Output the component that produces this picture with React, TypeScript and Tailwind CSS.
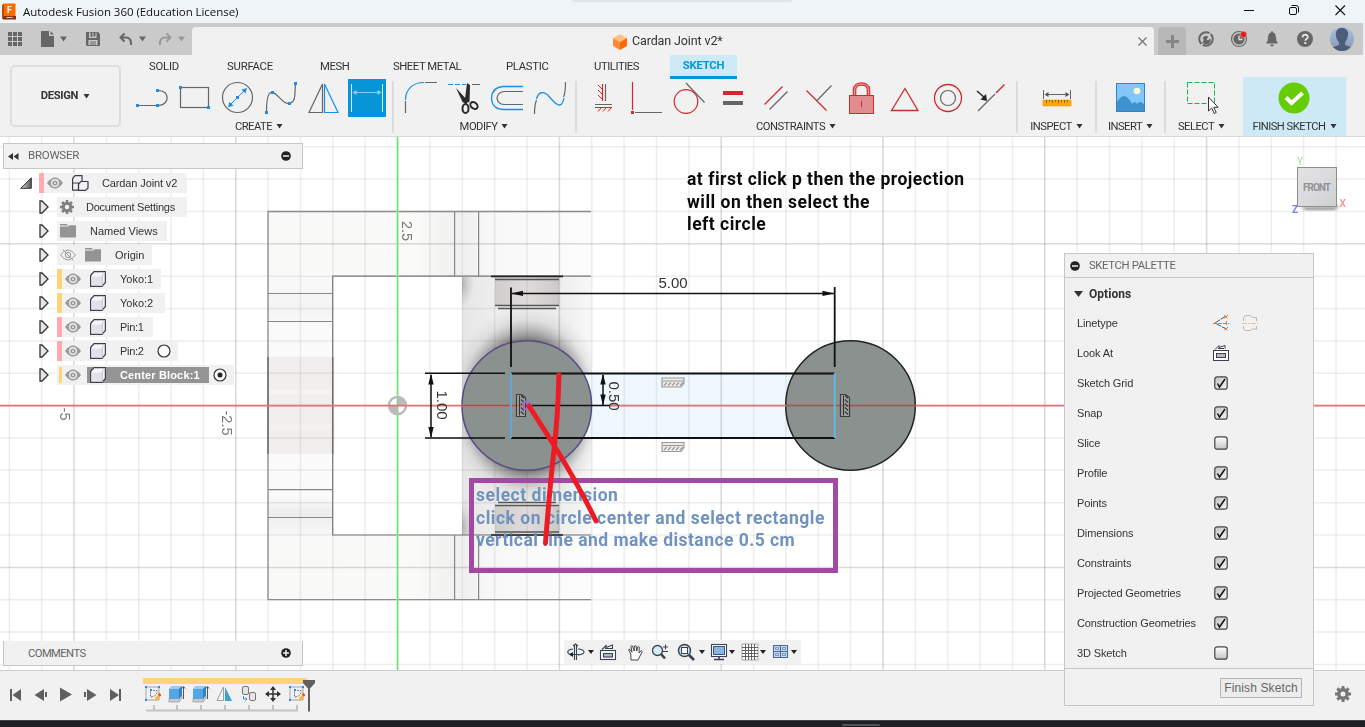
import React from "react";

type Kids = { children?: React.ReactNode };

/** Drawing whose inner coordinates are those of the window. */
function Art({ x, y, w, h, className = "", children }: { x: number; y: number; w: number; h: number; className?: string } & Kids) {
  return (
    <svg width={w} height={h} viewBox={`${x} ${y} ${w} ${h}`} fill="none" className={`block shrink-0 ${className}`}>
      {children}
    </svg>
  );
}

function Caret({ className = "ml-[4px]" }: { className?: string }) {
  return (
    <svg width="7" height="5" viewBox="0 0 7 5" className={`shrink-0 ${className}`}>
      <path d="M.5 0h6L3.500 4.500z" fill="#333" />
    </svg>
  );
}

const BLUE = "#1a8fe8";
const GREY = "#666";
const RED = "#d12a2e";

function Dot({ x, y, c = BLUE }: { x: number; y: number; c?: string }) {
  return <rect x={x - 1.5} y={y - 1.5} width="3" height="3" fill={c} />;
}

/* ---------- title and tabs ---------- */

function TitleBar() {
  return (
    <div className="relative flex h-[23px] shrink-0 items-center bg-[#eff4f9]">
      <div className="absolute left-[572px] top-0 h-[2px] w-[220px] rounded-b bg-[#e0e4ea]" />
      <svg width="15" height="17" viewBox="0 0 15 17" className="ml-[2px]">
        <path d="M0 2.500 2 .5h11.500v13H0z" fill="#ff6b00" />
        <path d="M0 2.500 2 .5V13.500L0 15z" fill="#b84a08" />
        <path d="M0 15 2 13h12v3.500H1z" fill="#843306" />
        <text x="5" y="9.500" fontSize="8.500" fontWeight="700" fill="#fff" fontFamily="Roboto, sans-serif">F</text>
        <rect x="4.500" y="14" width="6" height="1" fill="#f3c6a6" />
      </svg>
      <span className="ml-[6px] font-['Open_Sans',sans-serif] text-[11.500px] leading-none tracking-[-0.050px] text-[#111]">
        Autodesk Fusion 360 (Education License)
      </span>
      <Art x={1230} y={0} w={135} h={23} className="ml-auto">
        <path d="M1244 10.500h10M1335.500 5.500l9.500 9.500M1345 5.500 1335.500 15" stroke="#111" strokeWidth="1.100" />
        <rect x="1289.500" y="7.500" width="7" height="7" rx="1.500" stroke="#111" />
        <path d="M1291.500 5.500h4.500q2.500 0 2.500 2.500v4.500" stroke="#111" />
      </Art>
    </div>
  );
}

function TabBar() {
  return (
    <div className="flex h-8 shrink-0 items-end bg-[#cacaca]">
      <Art x={0} y={23} w={192} h={32}>
        <g fill="#666">
          {[8, 13, 18].map((x) => [32, 37, 42].map((y) => <rect key={`${x}-${y}`} x={x} y={y} width="4" height="4" />))}
          <path d="M41 31h8v5h5v11H41zM50.500 31l3.500 3.500h-3.500z" />
          <path d="M60 36.500h7l-3.500 5zM139 36.500h7l-3.500 5z" />
          <path fillRule="evenodd" d="M86 32h12l2 2v12H87l-1-1zM89 32.500v5.500h7.500v-5.500h-1v4h-2v-4h-1v4.500h-2v-4.500zM88.500 40h9v5h-9z" />
          <path d="M90 41.500h6v1h-6zM90 43.500h6v1h-6z" />
        </g>
        <path d="M124.500 33.500 120.500 37.500l4 4M121 37.500h5.500q5 .5 4.500 7.500" stroke="#666" strokeWidth="2" />
        <path d="M166.500 33.500l4 4-4 4M170 37.500h-5.500q-5 .5-4.500 7.500" stroke="#999" strokeWidth="2" />
        <path d="M178 36.500h7l-3.500 5z" fill="#999" />
      </Art>
      <div className="flex h-7 w-[962px] items-center rounded-t-[4px] bg-[#f1f1f1]">
        <svg width="14" height="16" viewBox="0 0 14 16" className="ml-[421px] mt-px">
          <path d="M7 0l7 4-7 4-7-4z" fill="#ffc08c" />
          <path d="M0 4l7 4v8l-7-4z" fill="#ff8a33" />
          <path d="M14 4 7 8v8l7-4z" fill="#f96a0a" />
        </svg>
        <span className="ml-[5px] mt-px w-[110px] whitespace-nowrap font-[Roboto,sans-serif] text-[12.500px] leading-none tracking-[-0.120px] text-[#333]">
          Cardan Joint v2*
        </span>
        <svg width="9" height="9" viewBox="0 0 9 9" className="ml-auto mr-[7px]">
          <path d="M.5.5l8 8M8.500.5l-8 8" stroke="#777" strokeWidth="1.300" />
        </svg>
      </div>
      <div className="ml-1 flex h-7 w-7 items-center justify-center rounded-t-[4px] bg-[#b8b8b8]">
        <svg width="13" height="13" viewBox="0 0 13 13">
          <path d="M6.500 0v13M0 6.500h13" stroke="#858585" strokeWidth="3" />
        </svg>
      </div>
      <Art x={1186} y={23} w={177} h={32}>
        <circle cx="1206" cy="39" r="6.800" stroke="#666" strokeWidth="2" strokeDasharray="14 1.500 20 1.500" />
        <path d="M1202 43l3-3M1204 39l-1-1q2-3 5-1l-2 2 2 2 2-2q1 4-3 5l-3 0z" fill="#666" stroke="#666" strokeWidth="1" />
        <circle cx="1239" cy="39" r="7.500" stroke="#666" strokeWidth="1.200" />
        <circle cx="1239" cy="39" r="5.600" fill="#666" />
        <path d="M1239 35.500v4h3.500" stroke="#ddd" strokeWidth="1.300" />
        <circle cx="1243.500" cy="34.500" r="3.200" fill="#e21b1b" stroke="#cacaca" strokeWidth=".5" />
        <path d="M1266 43.500q2-2.500 2-6 .3-4.500 3-5 0-1.500 1-1.500t1 1.500q2.700.5 3 5 0 3.500 2 6zM1270 44.500h4q-.5 2-2 2t-2-2z" fill="#666" />
        <circle cx="1305" cy="39" r="8" fill="#666" />
        <path d="M1302.500 37.500q0-2.800 2.700-2.800 2.600.2 2.600 2.300 0 1.300-1.600 2.200-.9.600-.9 1.600" stroke="#e5e5e5" strokeWidth="1.700" />
        <rect x="1304.300" y="42" width="2" height="2" fill="#e5e5e5" />
        <defs>
          <clipPath id="avatar"><circle cx="1342" cy="39" r="12" /></clipPath>
          <linearGradient id="avatarSky" x2="0" y2="1"><stop stopColor="#a9c0dc" /><stop offset="1" stopColor="#8499b6" /></linearGradient>
        </defs>
        <g clipPath="url(#avatar)">
          <rect x="1330" y="27" width="24" height="24" fill="url(#avatarSky)" />
          <path d="M1342 28c4.500 0 6.500 3 6 7-.3 3.500-2 6-3 7.500v2.500q5 1 7.500 3.500V52h-21v-3.500q2.500-2.500 7.500-3.500v-2.500c-1.500-2-3-4-3.200-7.500-.3-4 1.700-7 6.200-7z" fill="#4b5d78" />
        </g>
      </Art>
      <div className="ml-auto h-8 w-[2px] bg-[#eceef0]" />
    </div>
  );
}

/* ---------- ribbon ---------- */

const font = "font-[Roboto,sans-serif] leading-none";

function Group({ label, className = "", children }: { label: string; className?: string } & Kids) {
  return (
    <div className={`flex h-[59px] shrink-0 flex-col items-center pt-[1px] ${className}`}>
      <div className="flex h-10">{children}</div>
      <div className={`mt-[3px] flex items-center whitespace-nowrap text-[11.200px] tracking-[-0.500px] text-[#333] ${font}`}>
        {label}
        <Caret />
      </div>
    </div>
  );
}

function Rule({ className = "" }: { className?: string }) {
  return <div className={`mt-[4px] h-[52px] w-[2px] shrink-0 bg-[#dcdcdc] ${className}`} />;
}

function Ribbon() {
  return (
    <div className="flex h-[82px] shrink-0 border-b border-[#d9d9d9] bg-[#f1f1f1]">
      <div className={`ml-[10px] mt-[10px] flex h-[62px] w-[111px] items-center justify-center rounded-[5px] border-2 border-[#dedede] text-[11.200px] font-bold tracking-[-0.300px] text-[#333] ${font}`}>
        DESIGN
        <Caret className="ml-[5px]" />
      </div>
      <div className="flex flex-col">
        <div className={`flex h-[22px] items-center whitespace-nowrap text-[11.300px] tracking-[-0.450px] text-[#333] ${font}`}>
          <span className="ml-[28px] mt-px w-[78px] tracking-[-0.200px]">SOLID</span>
          <span className="mt-px w-[93px] tracking-[-0.200px]">SURFACE</span>
          <span className="mt-px w-[73px]">MESH</span>
          <span className="mt-px w-[113px]">SHEET METAL</span>
          <span className="mt-px w-[88px] tracking-[-0.300px]">PLASTIC</span>
          <span className="mt-px w-[76px]">UTILITIES</span>
          <span className="flex h-6 w-[67px] translate-y-px items-center justify-center border-b-[3px] border-[#0696d7] bg-[#cdeaf7] pt-px font-bold tracking-[-0.250px] text-[#0696d7]">SKETCH</span>
        </div>
        <div className="flex">
          <Group label="CREATE" className="ml-[9px] w-[258px]">
            <Art x={130} y={78} w={43} h={40}>
              <path d="M137 105.500h20q8 0 10-6 1-9-10-9" stroke={GREY} strokeWidth="1.200" />
              <Dot x={137.500} y={105.500} /><Dot x={157.500} y={105.500} /><Dot x={157.500} y={90.500} />
            </Art>
            <Art x={173} y={78} w={43} h={40}>
              <rect x="180.500" y="87.500" width="28" height="20" stroke={GREY} strokeWidth="1.200" />
              <Dot x={180.500} y={87.500} /><Dot x={208.500} y={107.500} />
            </Art>
            <Art x={216} y={78} w={43} h={40}>
              <circle cx="237.500" cy="97.500" r="15" stroke={GREY} strokeWidth="1.200" />
              <path d="M230 105l15-15" stroke={BLUE} />
              <path d="M228 107.300l1.500-5.500 4 4zM247 88l-1.500 5.500-4-4z" fill={BLUE} />
              <Dot x={237.500} y={97.500} />
            </Art>
            <Art x={259} y={78} w={43} h={40}>
              <path d="M266.500 112c0-20 4-22 9-18s9 11 15 9 4-12 5-19" stroke={GREY} strokeWidth="1.200" />
              <Dot x={266.500} y={112.500} /><Dot x={272.500} y={92.500} /><Dot x={289.500} y={103.500} /><Dot x={295.500} y={83.500} />
            </Art>
            <Art x={302} y={78} w={43} h={40}>
              <path d="M322.500 84v28.500h-13.500z" stroke={GREY} strokeWidth="1.200" />
              <path d="M324.500 84v28.500H338z" stroke={BLUE} strokeWidth="1.200" />
            </Art>
            <Art x={345} y={78} w={43} h={40}>
              <rect x="348" y="79" width="38" height="38" fill="#0696d7" />
              <path d="M351.500 84v28M382.500 84v28" stroke="#d5eefa" />
              <path d="M354 92.500h26" stroke="#8dd0f5" />
              <path d="M352.500 92.500l4-2.500v5zM381.500 92.500l-4-2.500v5z" fill="#8dd0f5" />
            </Art>
          </Group>
          <Rule className="ml-[4px]" />
          <Group label="MODIFY" className="w-[180px]">
            <Art x={398} y={78} w={43} h={40}>
              <path d="M405.500 101V113M425 82.500h12" stroke={GREY} strokeWidth="1.200" />
              <path d="M405.500 100C405.500 89 413 82.500 424 82.500" stroke={BLUE} strokeWidth="1.200" />
            </Art>
            <Art x={441} y={78} w={43} h={40}>
              <path d="M448 84.500h18" stroke={BLUE} strokeDasharray="5 2" />
              <path d="M472 84.500h8" stroke={GREY} />
              <path d="M456 88l12 13-1.500 3-4-2zM467 83l3 2-.5 17-5 1z" fill="#2a2a2a" />
              <ellipse cx="465.500" cy="108.500" rx="3" ry="4.500" stroke="#2a2a2a" strokeWidth="2" />
              <ellipse cx="474" cy="105.500" rx="3" ry="4" stroke="#2a2a2a" strokeWidth="2" transform="rotate(-50 474 105.500)" />
            </Art>
            <Art x={484} y={78} w={43} h={40}>
              <path d="M523 86.500h-20q-11 1-11.500 11.500.5 11 11.500 11.500h20" stroke={BLUE} strokeWidth="1.300" />
              <path d="M523 91.500h-19q-6.500 1-7 6.500.5 6 7 6.500h19" stroke={GREY} strokeWidth="1.200" />
            </Art>
            <Art x={527} y={78} w={43} h={40}>
              <path d="M534.500 114q0-9 2-14M563.500 97q2-4 2-15" stroke={GREY} strokeWidth="1.200" />
              <path d="M536.500 99c2-8 8-8 13-2s12 14 14.500 1" stroke={BLUE} strokeWidth="1.300" />
            </Art>
          </Group>
          <Rule className="ml-px" />
          <Group label="CONSTRAINTS" className="w-[438px]">
            <Art x={581} y={78} w={43} h={40}>
              <path d="M602.500 84v17M595 107.500h17" stroke={RED} strokeWidth="1.200" />
              <path d="M605.500 84v17M595 104.500h17" stroke={GREY} strokeWidth="1.200" />
              <path d="M598 85l4 4m-4 1 4 4m-4 1 4 4M598 111.500l3-3.500m2 3.500 3-3.500m2 3.500 3-3.500" stroke={RED} />
            </Art>
            <Art x={624} y={78} w={43} h={40}>
              <path d="M632.500 82v28" stroke={RED} strokeWidth="1.200" /><path d="M635 112.500h27" stroke={GREY} />
              <Dot x={632.500} y={112.500} c={RED} />
            </Art>
            <Art x={667} y={78} w={43} h={40}>
              <path d="M686 83l18.500 19.500" stroke={GREY} strokeWidth="1.200" />
              <circle cx="686" cy="101.500" r="11.800" stroke={RED} strokeWidth="1.200" />
            </Art>
            <Art x={710} y={78} w={43} h={40}>
              <path d="M723 93h20" stroke={RED} strokeWidth="4" /><path d="M723 103h20" stroke={GREY} strokeWidth="4" />
            </Art>
            <Art x={753} y={78} w={43} h={40}>
              <path d="M764.500 104.500l18-18" stroke={RED} strokeWidth="1.200" /><path d="M769.500 109.500l18-18" stroke={GREY} strokeWidth="1.200" />
            </Art>
            <Art x={796} y={78} w={43} h={40}>
              <path d="M806.500 90.500l20 20" stroke={RED} strokeWidth="1.200" /><path d="M817 100.500l14.500-15" stroke={GREY} strokeWidth="1.200" />
            </Art>
            <Art x={839} y={78} w={43} h={40}>
              <path d="M854.500 96v-6c0-8 14-8 14 0v6" stroke={RED} strokeWidth="3.600" />
              <path d="M854.500 96v-6c0-8 14-8 14 0v6" stroke="#df8d8d" strokeWidth="1.600" />
              <rect x="849.500" y="95.500" width="24" height="18" fill="#df8d8d" stroke={RED} />
              <path d="M861.500 101v6" stroke={RED} />
            </Art>
            <Art x={882} y={78} w={43} h={40}>
              <path d="M905 88.500l13 22h-26.500z" stroke={RED} strokeWidth="1.300" />
            </Art>
            <Art x={925} y={78} w={43} h={40}>
              <circle cx="948" cy="98" r="13.500" stroke={RED} strokeWidth="1.300" /><circle cx="948" cy="98" r="7.500" stroke={GREY} strokeWidth="1.200" />
            </Art>
            <Art x={968} y={78} w={43} h={40}>
              <path d="M978 111l17-17" stroke={GREY} strokeWidth="1.200" /><path d="M996 93l8.500-8.500" stroke={RED} strokeWidth="1.400" />
              <path d="M977 91l8 7" stroke="#222" strokeWidth="1.400" /><path d="M987 101l-6.500-1.500 5.500-5.500z" fill="#222" />
            </Art>
          </Group>
          <Rule className="ml-px" />
          <Group label="INSPECT" className="w-[77px]">
            <Art x={1036} y={78} w={41} h={40}>
              <path d="M1043.500 90v9M1070.500 90v9M1046 94.500h22" stroke={GREY} />
              <path d="M1044.500 94.500l4-2.500v5zM1069.500 94.500l-4-2.500v5z" fill="#555" />
              <rect x="1043" y="100" width="28" height="6" fill="#ffa800" stroke="#ef9b00" strokeWidth=".6" />
              <path d="M1046.500 100v3m3-3v2m3-2v3m3-3v2m3-2v3m3-3v2m3-2v3m3-3v2" stroke="#8b610b" />
            </Art>
          </Group>
          <Rule />
          <Group label="INSERT" className="w-[67px]">
            <Art x={1109} y={78} w={43} h={40}>
              <rect x="1116" y="83" width="29" height="29" fill="#82c7fb" />
              <path d="M1116 104q8-16 16 0 3-4 5 0 4-5 8 2v6h-29z" fill="#3f92ce" />
              <rect x="1116.500" y="83.500" width="28" height="28" stroke="#3187bd" />
              <circle cx="1137" cy="91" r="3.300" fill="#fff9ce" />
            </Art>
          </Group>
          <Rule />
          <Group label="SELECT" className="w-[71px]">
            <Art x={1180} y={78} w={43} h={40}>
              <rect x="1187.500" y="82.500" width="27" height="21" stroke="#1fae55" strokeDasharray="5 2" />
              <path d="M1208.500 97v14l3.200-3 2.500 5.500 2-1-2.400-5.200h4.300z" fill="#fff" stroke="#333" />
            </Art>
          </Group>
          <Group label="FINISH SKETCH" className="ml-[6px] w-[103px] bg-[#cce9f5]">
            <Art x={1273} y={78} w={43} h={40}>
              <circle cx="1294" cy="98" r="15.500" fill="#66cc05" />
              <path d="M1286 97.500l5.500 5.500 11-10" stroke="#fff" strokeWidth="4" />
            </Art>
          </Group>
        </div>
      </div>
    </div>
  );
}

/* ---------- sketch canvas ---------- */

const STEP = 32.36;

function Glyph({ x, y, turn = 0 }: { x: number; y: number; turn?: number }) {
  return (
    <g transform={`translate(${x} ${y}) rotate(${turn})`}>
      <path d="M-11-4.500h22v5l-3 4h-19z" fill="#ececec" fillOpacity={turn ? 0.25 : 1} stroke={turn ? "#3c3e3d" : "#999"} strokeWidth="1.200" />
      <path d="M-10-1.500h20M-9 3l3-3m1 3 3-3m1 3 3-3m1 3 3-3m1 3 3-3" stroke={turn ? "#333" : "#999"} strokeWidth="1.200" />
    </g>
  );
}

function Canvas() {
  const cols = Array.from({ length: 43 }, (_, i) => i - 12);
  const rows = Array.from({ length: 17 }, (_, i) => i - 8);
  return (
    <svg width="1365" height="533" viewBox="0 137 1365 533" fill="none" className="absolute inset-0">
      <defs>
        <radialGradient id="halo" gradientUnits="userSpaceOnUse" cx="0" cy="0" r="100" gradientTransform="translate(527 405.500) scale(.8 1)">
          <stop offset=".6" stopColor="#3a3a3a" stopOpacity=".85" />
          <stop offset=".7" stopColor="#555" stopOpacity=".55" />
          <stop offset=".86" stopColor="#888" stopOpacity=".14" />
          <stop offset="1" stopColor="#999" stopOpacity="0" />
        </radialGradient>
        <linearGradient id="arm" x2="1" y2="0">
          <stop stopColor="#f9f9f8" /><stop offset=".45" stopColor="#fafaf9" /><stop offset=".57" stopColor="#f1f1f0" />
          <stop offset=".61" stopColor="#f0f0f1" /><stop offset=".68" stopColor="#f7f7f7" /><stop offset=".8" stopColor="#fafafa" /><stop offset="1" stopColor="#fcfcfc" />
        </linearGradient>
        <linearGradient id="post" x2="0" y2="1">
          <stop stopColor="#f9f9f9" /><stop offset=".13" stopColor="#f3f3f3" /><stop offset=".18" stopColor="#fafafa" />
          <stop offset=".5" stopColor="#fbfbfb" /><stop offset=".85" stopColor="#fafafa" /><stop offset=".92" stopColor="#ededed" /><stop offset="1" stopColor="#f8f8f8" />
        </linearGradient>
        <linearGradient id="inner" x2="1" y2="0">
          <stop stopColor="#e6e6e6" /><stop offset=".25" stopColor="#eeeeee" /><stop offset=".75" stopColor="#ededed" /><stop offset="1" stopColor="#f8f8f8" />
        </linearGradient>
        <radialGradient id="corner"><stop stopColor="#888" stopOpacity=".55" /><stop offset="1" stopColor="#aaa" stopOpacity="0" /></radialGradient>
        <linearGradient id="pin" x2="1" y2="0">
          <stop stopColor="#cfcdcc" /><stop offset=".5" stopColor="#dfdcdb" /><stop offset="1" stopColor="#cccac9" />
        </linearGradient>
        <clipPath id="well"><rect x="462" y="277" width="129.500" height="258" /></clipPath>
      </defs>
      <rect y="137" width="1365" height="533" fill="#fff" />

      <rect x="268" y="211.500" width="323.500" height="65" fill="url(#arm)" />
      <rect x="268" y="535" width="323.500" height="65" fill="url(#arm)" />
      <rect x="268" y="276" width="65" height="259" fill="url(#post)" />
      <path d="M268 357h65v97h-65z" fill="#f0efee" />
      <path d="M268 392h65M268 427h65" stroke="#f4f3f2" strokeWidth="5" />
      <g clipPath="url(#well)">
        <rect x="462" y="277" width="130" height="258" fill="url(#inner)" />
        <ellipse cx="462" cy="284" rx="12" ry="24" fill="url(#corner)" />
        <ellipse cx="462" cy="527" rx="12" ry="26" fill="url(#corner)" />
        <rect x="495" y="277" width="64" height="29" fill="url(#pin)" />
        <rect x="495" y="505" width="64" height="29" fill="url(#pin)" />
        <circle cx="527" cy="405.500" r="102" fill="url(#halo)" />
      </g>
      <rect x="511" y="373.500" width="324" height="64.500" fill="#f0f8ff" />

      {cols.map((i) => {
        const x = 397.6 + i * STEP;
        return <path key={i} d={`M${x} 137V670`} stroke={i % 5 ? "#eeeeee" : "#d9d9d9"} strokeWidth="1.500" style={{ mixBlendMode: "multiply" }} />;
      })}
      {rows.map((i) => {
        const y = 405.6 + i * STEP;
        return <path key={i} d={`M0 ${y}H1365`} stroke={i % 5 ? "#eeeeee" : "#dbdbdb"} strokeWidth="1.500" style={{ mixBlendMode: "multiply" }} />;
      })}

      <path d="M591 211.500H268V599.600H591" stroke="#8c8c8c" strokeWidth="1.300" />
      <path d="M591 276.200H332.700V535H591" stroke="#777" strokeWidth="1.200" />
      <path d="M268 293.500h65M268 321.500h65M268 489.700h65M268 517.500h65" stroke="#888" strokeWidth="1.200" />
      <path d="M268 357v97M332.700 357v97" stroke="#707070" strokeWidth="1.500" />
      <path d="M454.600 211.500v65M478.600 211.500v65M454.600 535v65M478.600 535v65" stroke="#888" strokeWidth="1.200" />
      <path d="M491 276.300h72M491 535h72" stroke="#222" strokeWidth="1.700" />
      <path d="M495 279.500h64M495 305.500h64M498 308.500h58M498 502.500h58M495 505.500h64M495 532h64" stroke="#555" strokeWidth="1.400" />

      <path d="M397.500 137V670" stroke="#fff" strokeWidth="1.600" />
      <path d="M397.500 137V670" stroke="#6be36b" strokeWidth="1.600" />
      <circle cx="397.500" cy="405.500" r="8.500" stroke="#b9bab9" strokeWidth="2.500" />
      <path d="M397.500 396.500a9 9 0 0 1 9 9h-9zM397.500 414.500a9 9 0 0 1-9-9h9z" fill="#b9bab9" />

      <circle cx="526.800" cy="405.500" r="64.800" fill="#8b918f" stroke="#594b85" strokeWidth="1.500" />
      <circle cx="850.500" cy="405.500" r="64.800" fill="#8b918f" stroke="#1d2526" strokeWidth="1.500" />
      <path d="M0 405.600H527M610 405.600H786M915 405.600h450" stroke="#df7777" strokeWidth="1.600" />
      <path d="M786 405.600h130" stroke="#a5504f" strokeWidth="1.500" />
      <path d="M462 405.600h65" stroke="#a5504f" strokeWidth="1.500" />

      <path d="M511 373.500H835M511 438H835" stroke="#111" strokeWidth="1.900" />
      <path d="M511 373v65" stroke="#57addb" strokeWidth="1.800" />
      <path d="M834.700 373v65" stroke="#5bbcf0" strokeWidth="1.800" />
      <g stroke="#111" strokeWidth="1.500">
        <path d="M511 287.500V367M834.700 287V367" strokeWidth="1.800" />
        <path d="M512 293.400H834M425 373.300h80M425 438h80M431 375v62M603 375v30M528 405.600h82" />
      </g>
      <g fill="#111">
        <path d="M511 293.400l12-2.700v5.400zM834.500 293.400l-12-2.700v5.400z" />
        <path d="M431 373.500l-2.700 11h5.400zM431 438l-2.700-11h5.400zM603 373.500l-2.700 11h5.400zM603 405.600l-2.700-11h5.400z" />
      </g>
      <g fontFamily="'Liberation Sans', sans-serif" fontSize="15" fill="#333" textAnchor="middle">
        <text x="673" y="287.500">5.00</text>
        <text transform="translate(437 405) rotate(90)">1.00</text>
        <text transform="translate(609 396) rotate(90)">0.50</text>
        <g fill="#777" fontSize="14.500">
          <text transform="translate(402 231) rotate(90)">2.5</text>
          <text transform="translate(60 414) rotate(90)">-5</text>
          <text transform="translate(222 423) rotate(90)">-2.5</text>
        </g>
      </g>
      <Glyph x={673} y={382.500} />
      <Glyph x={673} y={447} />
      <Glyph x={521} y={405.500} turn={-90} />
      <Glyph x={845} y={405.500} turn={-90} />
      <circle cx="527" cy="405.500" r="4" stroke="#9b70d6" strokeWidth="2" />

      <text x="1297" y="165" fontSize="10" fontWeight="500" fill="#a4eda4" fontFamily="Roboto, sans-serif">Y</text>
      <text x="1339.500" y="207" fontSize="10" fontWeight="500" fill="#ff8a8a" fontFamily="Roboto, sans-serif">X</text>
      <text x="1292" y="212.500" fontSize="10" fontWeight="700" fill="#7b7bf5" fontFamily="Roboto, sans-serif">Z</text>
      <defs>
        <linearGradient id="cube" x2="1" y2="1"><stop stopColor="#e3e3e3" /><stop offset=".5" stopColor="#dadbdd" /><stop offset="1" stopColor="#cfcfcf" /></linearGradient>
        <filter id="soft"><feGaussianBlur stdDeviation="1.500" /></filter>
      </defs>
      <path d="M1301 207h36l2-3v3l-5 3h-28z" fill="#888" filter="url(#soft)" />
      <rect x="1297.500" y="167.500" width="39" height="39" fill="url(#cube)" stroke="#8e8e8e" />
      <text x="1303" y="191" fontSize="10" fontWeight="700" textLength="28" fill="#929395" fontFamily="Roboto, sans-serif">FRONT</text>
    </svg>
  );
}

function Notes() {
  const type = "whitespace-pre font-[Roboto,sans-serif] font-bold leading-[22.500px]";
  return (
    <>
      <div className={`absolute left-[687px] top-[31px] text-[17.500px] tracking-[0.500px] text-[#0a0a0a] ${type}`}>
        {"at first click p then the projection\nwill on then select the\nleft circle"}
      </div>
      <div className={`absolute left-[469px] top-[341px] h-[95px] w-[369px] border-[5px] border-[#a349a4] pl-[2px] pt-px text-[17.500px] tracking-[0.520px] text-[#7092be] ${type}`}>
        {"select dimension\nclick on circle center and select rectangle\n"}
        <span className="tracking-[0.450px]">vertical line and make distance 0.5 cm</span>
      </div>
      <svg width="80" height="180" viewBox="525 370 80 180" className="absolute left-[525px] top-[233px]">
        <path d="M559 375q-1 40-5 75t-8.500 93M529 406l23 36q25 40 44 79" fill="none" stroke="#ed1c24" strokeWidth="5" strokeLinecap="round" />
      </svg>
    </>
  );
}

/* ---------- browser ---------- */

function Eye() {
  return (
    <svg width="16" height="12" viewBox="0 0 16 12" fill="none" className="shrink-0">
      <path d="M0 6Q8-5 16 6 8 17 0 6z" fill="#999" />
      <circle cx="8" cy="6" r="3.300" fill="#999" stroke="#f1f1f1" strokeWidth="1.400" />
      <circle cx="8" cy="6" r="1" fill="#eee" />
    </svg>
  );
}

function EyeOff() {
  return (
    <svg width="16" height="12" viewBox="0 0 16 12" fill="none" className="shrink-0" stroke="#999">
      <path d="M.5 6Q8-4 15.500 6 8 16 .5 6z" /><circle cx="8" cy="6" r="2.700" /><path d="M2.500.5l11 11" />
    </svg>
  );
}

function Folder() {
  return (
    <svg width="16" height="14" viewBox="0 0 16 14" fill="#949494" className="shrink-0">
      <path d="M0 0h7l1 1.500H0zM0 2.500h8l1.500-1.200H16V13.500H0z" />
    </svg>
  );
}

function Gear({ size = 14, color = "#808080" }: { size?: number; color?: string }) {
  return (
    <svg width={size} height={size} viewBox="-8 -8 16 16" fill="none" className="shrink-0">
      <circle r="4.200" stroke={color} strokeWidth="3.400" />
      {[0, 45, 90, 135, 180, 225, 270, 315].map((a) => (
        <rect key={a} x="-1.500" y="-8" width="3" height="3.500" fill={color} transform={`rotate(${a})`} />
      ))}
    </svg>
  );
}

function Body() {
  return (
    <svg width="16" height="16" viewBox="0 0 16 16" className="shrink-0">
      <path d="M.6 4.500 4 .6h11.400v10.900L12 15.400H.6z" fill="#f6f6f8" stroke="#3c3f4a" strokeWidth="1.200" strokeLinejoin="round" />
      <path d="M2 5.500h9.500V14H2z" fill="#e2e3e8" />
      <path d="M12.300 4.500V15M12.300 4.200l3-3" stroke="#b9bbc4" />
    </svg>
  );
}

function Assembly() {
  return (
    <svg width="17" height="16" viewBox="0 0 17 16" fill="#f3f3f5" stroke="#3c3f4a" strokeWidth="1.200" strokeLinejoin="round" className="shrink-0">
      <path d="M.6 3.500 3 .6h7v5.500l-2 9H.6z" />
      <path d="M6.500 9 9 6.500h7v6.500l-2.500 2.400h-7z" />
      <path d="M1 8h5.500v7" fill="none" />
    </svg>
  );
}

type Row = { name: string; width: string; bar?: string; icon: React.ReactNode; eye?: React.ReactNode; text: string };

const rows: Row[] = [
  { name: "Document Settings", width: "w-[130px]", icon: <Gear />, text: "ml-[12px] tracking-[-0.230px]" },
  { name: "Named Views", width: "w-[110px]", icon: <Folder />, text: "ml-[14px] tracking-[0px]" },
  { name: "Origin", width: "w-[95px]", eye: <EyeOff />, icon: <Folder />, text: "ml-[14px]" },
  { name: "Yoko:1", width: "w-[104px]", bar: "bg-[#ffd479]", eye: <Eye />, icon: <Body />, text: "ml-[14px]" },
  { name: "Yoko:2", width: "w-[108px]", bar: "bg-[#ffd479]", eye: <Eye />, icon: <Body />, text: "ml-[14px]" },
  { name: "Pin:1", width: "w-[96px]", bar: "bg-[#ffa9b0]", eye: <Eye />, icon: <Body />, text: "ml-[14px] tracking-[-0.300px]" },
  { name: "Pin:2", width: "w-[121px]", bar: "bg-[#ffa9b0]", eye: <Eye />, icon: <Body />, text: "ml-[14px] tracking-[-0.300px]" },
  { name: "Center Block:1", width: "w-[177px]", bar: "bg-[#ffd479]", eye: <Eye />, icon: <Body />, text: "ml-[14px] tracking-[0.150px]" },
];

function Radio({ on }: { on?: boolean }) {
  return (
    <svg width="14" height="14" viewBox="0 0 14 14" className="shrink-0">
      <circle cx="7" cy="7" r="6" fill="#f8f8f8" stroke="#333" strokeWidth="1.200" />
      {on && <circle cx="7" cy="7" r="2.500" fill="#222" />}
    </svg>
  );
}

function PanelMark({ plus }: { plus?: boolean }) {
  return (
    <svg width="10" height="10" viewBox="0 0 10 10" className="shrink-0">
      <circle cx="5" cy="5" r="4.800" fill="#222" />
      <path d={plus ? "M2 5h6M5 2v6" : "M2 5h6"} stroke="#f1f1f1" strokeWidth="1.500" />
    </svg>
  );
}

const tree = "font-['Liberation_Sans',sans-serif] text-[11px] leading-none whitespace-nowrap";

function Browser() {
  return (
    <div className="absolute left-[3px] top-[6px] w-[300px]">
      <div className="flex h-[26px] items-center border border-[#c6c6c6] bg-[#f1f1f1] pr-[11px]">
        <svg width="11" height="7" viewBox="0 0 11 7" className="ml-[4px]"><path d="M5 0v7L0 3.500zM10.500 0v7l-5-3.500z" fill="#333" /></svg>
        <span className={`ml-[9px] mr-auto text-[11.500px] tracking-[-0.250px] text-[#666] ${font}`}>BROWSER</span>
        <PanelMark />
      </div>
      <div className="mt-[4px] flex flex-col gap-1 text-[#333]">
        <div className="flex h-5 items-center">
          <svg width="12" height="12" viewBox="0 0 12 12" className="ml-[17px] mr-[7px] shrink-0"><defs><linearGradient id="tri"><stop stopColor="#ddd" /><stop offset="1" stopColor="#555" /></linearGradient></defs><path d="M11.300.8v10.500H.8z" fill="url(#tri)" stroke="#333" /></svg>
          <div className="flex h-5 w-[148px] items-center bg-[#f1f1f1]">
            <div className="mr-[3px] h-5 w-[5px] bg-[#ffa9b0]" />
            <Eye />
            <div className="ml-[9px] mr-[13px]"><Assembly /></div>
            <span className={`${tree} tracking-[-0.120px]`}>Cardan Joint v2</span>
          </div>
        </div>
        {rows.map((r, i) => (
          <div key={r.name} className="flex h-5 items-center">
            <svg width="10" height="14" viewBox="0 0 10 14" className="ml-[35.500px] mr-[8.500px] shrink-0"><path d="M1 1h2l6 6-6 6H1z" fill="#e5e5e5" stroke="#333" strokeWidth="1.300" /></svg>
            <div className={`flex h-5 items-center bg-[#f1f1f1] ${r.width}`}>
              {r.bar ? <div className={`mr-[3px] shrink-0 ${i === 7 ? "h-4 w-[3px] ml-[2px]" : "h-5 w-[5px]"} ${r.bar}`} /> : <div className="w-[3px]" />}
              {r.eye}
              {i === 7 ? (
                <>
                  <div className="ml-[6px] flex h-4 w-[122px] shrink-0 items-center bg-[#949494] pl-[3px]">
                    {r.icon}
                    <span className={`${tree} font-bold text-white ${r.text}`}>{r.name}</span>
                  </div>
                  <div className="ml-[3.500px]"><Radio on /></div>
                </>
              ) : (
                <>
                  <div className={r.eye ? "ml-[9px]" : ""}>{r.icon}</div>
                  <span className={`${tree} ${r.text}`}>{r.name}</span>
                  {i === 6 && <div className="ml-[13px]"><Radio /></div>}
                </>
              )}
            </div>
          </div>
        ))}
      </div>
    </div>
  );
}

/* ---------- navigation bar ---------- */

function NavBar() {
  return (
    <div className="absolute left-[564px] top-[503px] bg-[#f1f1f1]">
      <Art x={564} y={640} w={237} h={24}>
        <g stroke="#3b4250" strokeWidth="1.100">
          <path d="M574.500 645v15M576.500 645v15M573 646l2.500-2 2.500 2" />
          <path d="M573 649c-7 1-7 5 0 6M578 649c7 .5 9 5 0 6M573 654.500h7" /><path d="M573 652v5l-4-2.500z" fill="#222" stroke="none" />
          <rect x="600.500" y="650.500" width="15" height="9" fill="#fff" /><rect x="603.500" y="653.500" width="9" height="3.500" fill="#b6bac3" />
          <path d="M602 649.500l4-4v2l6.500-2.500v3M605 648.500h8" />
        </g>
        <path d="M631 660h7l3-6q2-3 .5-3.500l-2.500 2.500 .3-6q-1-1.500-1.700 0l-.8 4-.8-5q-1-1-1.600 0l-.2 5-1.700-5q-1.200-.8-1.500.3l1 6-2-3q-1.500-.5-1.200.8l2 4z" fill="#fff" stroke="#333" strokeWidth=".9" />
        <g stroke="#3b4250">
          <circle cx="657.500" cy="650.500" r="5" fill="#d7ecf1" strokeWidth="1.300" /><path d="M661 654l4 4.500" strokeWidth="2.600" />
          <path d="M663 647h5M665.500 644.500v5M663 651.500h5" />
          <circle cx="684.500" cy="650.500" r="6" fill="#cde5e6" strokeWidth="1.500" /><rect x="681.500" y="647.500" width="6" height="6" fill="#fff" /><path d="M689 655l5 5" strokeWidth="2.600" />
          <rect x="711.500" y="644.500" width="15" height="12" fill="#fff" strokeWidth="1.100" /><rect x="713.500" y="646.500" width="11" height="8" fill="#8eb5e0" stroke="#365887" /><path d="M714 659.500h10M719 657v2" strokeWidth="1.500" />
        </g>
        <rect x="742" y="644" width="16" height="16" fill="#fff" stroke="#777" strokeWidth=".6" />
        <path d="M745.500 644v16m3-16v16m3-16v16m3-16v16M742 647.500h16m-16 3h16m-16 3h16m-16 3h16" stroke="#555" strokeWidth=".9" />
        <g fill="#cadced" stroke="#476a99" strokeWidth="1.100">
          <path d="M773.500 645.500h7v6h-7zM780.500 645.500h7v6h-7zM773.500 651.500h7v6h-7zM780.500 651.500h7v6h-7z" />
          <path d="M775.500 647.500h3v2h-3zM782.500 647.500h3v2h-3zM775.500 653.500h3v2h-3zM782.500 653.500h3v2h-3z" strokeWidth=".6" />
        </g>
        <path d="M588 650h6l-3 4zM699 650h6l-3 4zM729 650h6l-3 4zM760 650h6l-3 4zM791 650h6l-3 4z" fill="#222" />
      </Art>
    </div>
  );
}

/* ---------- palette ---------- */

function Check({ on }: { on: boolean }) {
  return (
    <svg width="14" height="14" viewBox="0 0 14 14" fill="none" className="-mt-px">
      <defs>
        <linearGradient id="chk" x2="1" y2="1"><stop stopColor="#c3c3c3" /><stop offset="1" stopColor="#f4f4f4" /></linearGradient>
        <linearGradient id="unchk" x2="0" y2="1"><stop stopColor="#fff" /><stop offset="1" stopColor="#c5c5c5" /></linearGradient>
      </defs>
      <rect x=".8" y=".8" width="12.400" height="12.400" rx="2.500" fill={on ? "url(#chk)" : "url(#unchk)"} stroke="#444" strokeWidth="1.200" />
      {on && <path d="M3.500 7.500l2 3.500L11 3" stroke="#111" strokeWidth="1.500" />}
    </svg>
  );
}

const options: [string, boolean][] = [
  ["Sketch Grid", true], ["Snap", true], ["Slice", false], ["Profile", true], ["Points", true], ["Dimensions", true],
  ["Constraints", true], ["Projected Geometries", true], ["Construction Geometries", true], ["3D Sketch", false],
];

function Palette() {
  const row = "flex h-[30px] items-center";
  const name = "w-[137px] whitespace-nowrap pt-px";
  return (
    <div className="absolute left-[1064px] top-[253px] flex h-[453px] w-[250px] flex-col border border-[#c6c6c6] bg-[#f1f1f1] font-['Liberation_Sans',sans-serif] text-[11px] leading-none tracking-[-0.120px] text-[#333]">
      <div className={`flex h-[24px] items-center border-b border-[#c6c6c6] pl-[5px] text-[11.300px] tracking-[-0.350px] text-[#666] ${font}`}>
        <PanelMark />
        <span className="ml-[9px]">SKETCH PALETTE</span>
      </div>
      <div className="flex-1 pl-[12px]">
        <div className={`flex h-[30px] items-center pt-px text-[12px] font-bold tracking-[0.050px] ${font}`}>
          <svg width="9" height="6" viewBox="0 0 9 6" className="-ml-[3px] mr-[6px]"><path d="M0 0h9L4.500 6z" fill="#333" /></svg>
          Options
        </div>
        <div className={row}>
          <span className={name}>Linetype</span>
          <Art x={1212} y={313} w={48} h={20} className="-ml-[2px]">
            <path d="M1226 316l-11 7 11 6" stroke="#555" strokeDasharray="6 1" />
            <path d="M1213 323.500h16M1224 315l4 4m0-4-4 4M1224 327l4 4m0-4-4 4M1226.500 321v5" stroke="#e07a35" strokeDasharray="4 1" />
            <path d="M1243.500 321v-3l2-2.500h5l2 2h4v3.500M1243.500 326v3l2 1.500h5l2-1.500h4V326" stroke="#b8b8b8" />
            <path d="M1242 323.500h16" stroke="#f0b896" strokeDasharray="5 1 2 1" />
          </Art>
        </div>
        <div className={row}>
          <span className={name}>Look At</span>
          <Art x={1212} y={344} w={18} h={18} className="-ml-[2px]">
            <rect x="1213.500" y="350.500" width="15" height="10" fill="#fff" stroke="#3b4250" />
            <rect x="1216.500" y="353.500" width="9" height="4" fill="#b6bac3" stroke="#3b4250" />
            <path d="M1215 349.500l4-4v2l6-2v3M1218 348.500h6" stroke="#3b4250" />
          </Art>
        </div>
        {options.map(([label, on]) => (
          <div key={label} className={row}>
            <span className={name}>{label}</span>
            <Check on={on} />
          </div>
        ))}
      </div>
      <div className="flex h-[37px] items-start justify-end border-t border-[#c6c6c6] pr-[11px] pt-[9px]">
        <button className="h-5 w-[82px] whitespace-nowrap border border-[#b5b5b5] bg-[#ececec] text-[12px] leading-[17px] tracking-[0.120px] text-[#666]">Finish Sketch</button>
      </div>
    </div>
  );
}

/* ---------- timeline ---------- */

function SketchFeature({ x }: { x: number }) {
  return (
    <g transform={`translate(${x} 686)`}>
      <path d="M1 1h13v13H1z" stroke="#9aa6b3" />
      <path d="M5 4.500h7v2q-1 4-6.500 4.500V5" stroke="#777" strokeDasharray="2 1" />
      <path d="M0 0h2v2H0zM13 0h2v2h-2zM0 13h2v2H0zM5 3h2v2H5z" fill="#268de0" />
      <path d="M9.500 15l1-3.500 3-3 2 2-3 3.500z" fill="#f8b63a" /><path d="M13 8.500l1.500-1.500 1.800 2-1.300 1.500z" fill="#dc4236" />
    </g>
  );
}

function ExtrudeFeature({ x }: { x: number }) {
  return (
    <g transform={`translate(${x} 686)`}>
      <path d="M0 12h10l3-3v3l-3 4H0z" fill="#c9c9c9" stroke="#999" strokeWidth=".7" />
      <path d="M0 3l3-3h10v9l-3 4H0z" fill="#55a5e4" /><path d="M0 3l3-3h10l-3 3z" fill="#9bcdf3" /><path d="M10 3l3-3v9l-3 4z" fill="#2d83c6" />
      <path d="M14.500 13V1M13 2.500 14.500.5 16 2.500" stroke="#555" />
    </g>
  );
}

function Timeline() {
  return (
    <div className="flex h-[50px] shrink-0 items-start border-t border-[#cdcdcd] bg-[#f1f1f1]">
      <Art x={0} y={671} w={335} h={49}>
        <g fill="#606060">
          <path d="M10 689h2v12h-2zM21 689v12l-8.500-6zM44 689v12l-9.500-6zM45 692h2v5h-2zM60 687.500l12 7-12 7zM84 692h2v5h-2zM87 689v12l9.500-6zM110 689v12l9-6zM119 689h2v12h-2z" />
        </g>
        <path d="M143 678h164v6H143z" fill="#ffd479" />
        <path d="M146 710.500h152M154 705v5M177 705v5M201 705v5M225 705v5M249 705v5M273 705v5M297 705v5" stroke="#c4c4c4" strokeWidth="2" />
        <SketchFeature x={145} />
        <ExtrudeFeature x={169} />
        <ExtrudeFeature x={193} />
        <path d="M223.500 687v13.500H217z" fill="#f6f6f6" stroke="#888" strokeWidth=".8" /><path d="M225 687v14h7z" fill="#419ddd" />
        <rect x="242.500" y="686.500" width="6" height="8" rx="1.500" fill="#e5e5e5" stroke="#777" /><rect x="249.500" y="692.500" width="6" height="8" rx="1.500" fill="#e5e5e5" stroke="#777" />
        <path d="M243.500 696v3h3M245.500 697.500l1.500 1.500-1.500 1.500" stroke="#3990dd" />
        <path d="M273 687v14M266 694h14" stroke="#333" strokeWidth="1.500" />
        <path d="M273 686l3 4h-6zM273 702l3-4h-6zM265 694l4-3v6zM281 694l-4-3v6z" fill="#333" />
        <SketchFeature x={289} />
        <path d="M303 680h12v3l-5 5.500v23h-2v-23l-5-5.500z" fill="#606060" />
      </Art>
      <div className="ml-auto mr-[14px] mt-[15px]"><Gear size={16} color="#777" /></div>
    </div>
  );
}

export default function App() {
  return (
    <div className="relative flex h-[727px] w-[1365px] flex-col overflow-hidden bg-[#f1f1f1]">
      <TitleBar />
      <TabBar />
      <Ribbon />
      <div className="relative h-[533px] shrink-0 overflow-hidden">
        <Canvas />
        <Notes />
        <Browser />
        <div className="absolute left-[3px] top-[504px] flex h-[25px] w-[300px] items-center border border-t-0 border-[#c6c6c6] bg-[#f1f1f1] pl-[24px] pr-[11px]">
          <span className={`mr-auto pt-px text-[11.200px] tracking-[-0.550px] text-[#666] ${font}`}>COMMENTS</span>
          <PanelMark plus />
        </div>
        <NavBar />
      </div>
      <Timeline />
      <div className="h-[7px] shrink-0 border-t border-[#444] bg-[#1d1f25]">
        <div className="ml-[842px] mt-[3px] h-[2px] w-[38px] rounded bg-[#505258]" />
      </div>
      <Palette />
    </div>
  );
}
